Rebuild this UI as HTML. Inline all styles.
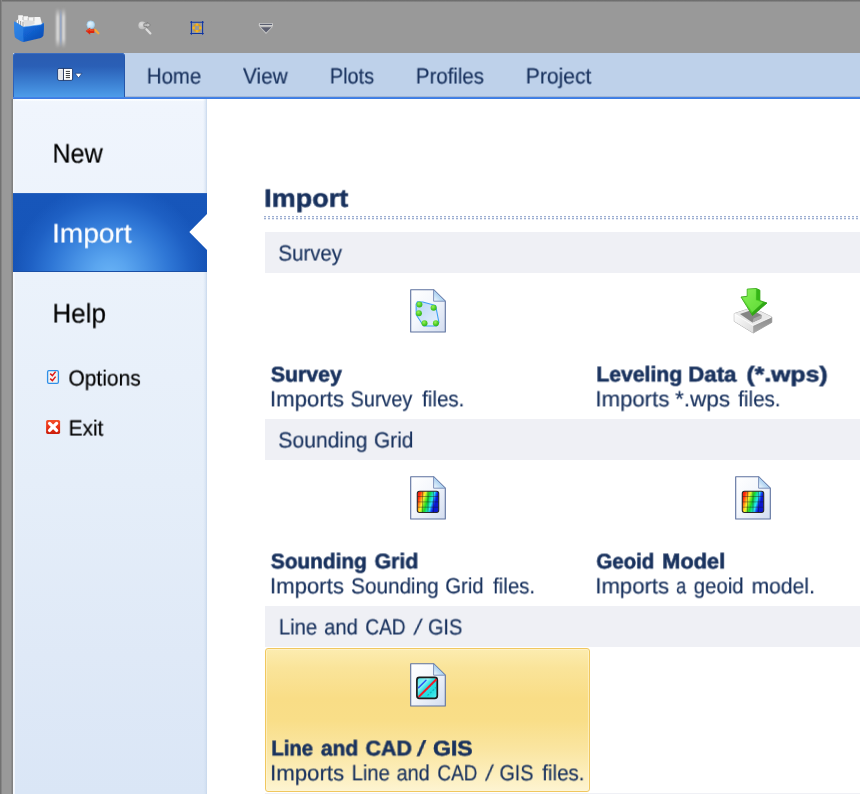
<!DOCTYPE html>
<html lang="en">
<head>
<meta charset="utf-8">
<title>Import</title>
<style>
html,body{margin:0;padding:0;}
body{width:860px;height:794px;overflow:hidden;position:relative;background:#fff;font-family:"Liberation Sans",sans-serif;}
.abs{position:absolute;}
.ln{position:absolute;left:0;top:0;width:0;height:0;font-size:0;line-height:0;white-space:pre;}
.t{position:absolute;white-space:pre;transform-origin:0 0;margin:0;padding:0;text-rendering:geometricPrecision;will-change:transform;}
#frame{left:0;top:0;width:860px;height:794px;background:#999999;}
#topedge{left:0;top:0;width:860px;height:2px;background:linear-gradient(#6c6c6c 0%,#707070 45%,#929292 100%);}
#leftedge{left:0;top:0;width:2px;height:794px;background:linear-gradient(90deg,#6e6e6e 0%,#747474 45%,#949494 100%);}
#sbedge{left:11px;top:99px;width:4px;height:695px;background:linear-gradient(90deg,#969696 0%,#858585 20%,#7e7e7e 44%,#f4f8fd 56%,#f8fbff 75%,#ebf2fb 100%);}
#ribbon{left:13px;top:53px;width:847px;height:44px;background:#bed1ea;}
#ribline{left:13px;top:96px;width:847px;height:3px;background:linear-gradient(#a9bcd8 0%,#9fb4d4 30%,#4683e6 42%,#3d7ce3 84%,#a2c3f5 100%);}
#appbtn{left:13px;top:53px;width:112px;height:44.4px;border-radius:4px 4px 0 0;background:linear-gradient(#2a5cb1 0%,#2a5fb6 30%,#3a7dd0 65%,#4d9ce9 100%);box-shadow:inset 0 1px 0 #3a6cc0, inset 1px 0 0 #2d62b8, inset -1px 0 0 #2456aa;}
#sidebar{left:13px;top:99px;width:194px;height:695px;background:linear-gradient(#fdfeff 0,#fbfdff 1.2px,#f1f6fd 2.4px,#f0f5fd 1%,#ebf2fb 25%,#e5eef9 55%,#dfe9f7 80%,#dae6f6 100%);}
#sbshade{left:203px;top:99px;width:4px;height:695px;background:linear-gradient(90deg,rgba(208,222,240,0) 0%,rgba(208,222,240,.45) 55%,#c8d8ec 100%);}
#content{left:207px;top:99px;width:653px;height:695px;background:#fff;}
#sel{left:13px;top:193px;width:194px;height:79px;background:radial-gradient(ellipse 98px 92px at 50% 104%,#68b2f5 0%,#5aa5ef 18%,#4690e4 38%,#2f77d6 60%,#1e60c4 82%,rgba(24,86,186,0) 100%),linear-gradient(#1756ba,#1655b9 60%,#1552b4);box-shadow:inset 0 1px 0 #2a63bd, inset 0 -1px 0 #1a4fa5;}
#notch{left:189px;top:214px;width:18px;height:36px;}
.ghead{left:265px;width:595px;height:41px;background:#eff0f5;}
#dots{left:264px;top:215.7px;width:596px;height:4px;}
#selitem{left:265px;top:648px;width:323px;height:142px;border:1px solid #f0c75f;border-radius:3px;background:linear-gradient(#fcecb0 0%,#fae49a 13%,#f9dd86 35%,#f9de88 50%,#fae5a0 70%,#fceebc 88%,#fdf4d2 100%);box-shadow:inset 0 0 0 1px rgba(255,248,220,.55);}
svg{position:absolute;overflow:visible;}
#tab1w0{left:146px;top:61px;font-size:22px;line-height:29px;font-weight:400;color:#19325e;transform:translate(0.78px,0.53px) scale(0.9279,0.999);-webkit-text-stroke:0.2px #19325e;}
#tab2w0{left:243px;top:61px;font-size:22px;line-height:29px;font-weight:400;color:#19325e;transform:translate(0.01px,0.53px) scale(0.9426,0.999);-webkit-text-stroke:0.2px #19325e;}
#tab3w0{left:329px;top:61px;font-size:22px;line-height:29px;font-weight:400;color:#19325e;transform:translate(0.83px,0.52px) scale(0.9037,0.999);-webkit-text-stroke:0.2px #19325e;}
#tab4w0{left:415px;top:61px;font-size:22px;line-height:29px;font-weight:400;color:#19325e;transform:translate(0.83px,0.53px) scale(0.9296,0.999);-webkit-text-stroke:0.2px #19325e;}
#tab5w0{left:525px;top:61px;font-size:22px;line-height:29px;font-weight:400;color:#19325e;transform:translate(0.72px,0.52px) scale(0.9604,0.999);-webkit-text-stroke:0.2px #19325e;}
#sb1w0{left:52px;top:136px;font-size:26.8px;line-height:35px;font-weight:400;color:#000;transform:translate(0.45px,0.61px) scale(0.9384,0.999);-webkit-text-stroke:0.2px #000;}
#sb2w0{left:52px;top:216px;font-size:26.8px;line-height:35px;font-weight:400;color:#fff;transform:translate(0.07px,0.53px) scale(1.0460,0.999);-webkit-text-stroke:0.2px #fff;}
#sb3w0{left:52px;top:296px;font-size:26.8px;line-height:35px;font-weight:400;color:#000;transform:translate(0.39px,0.56px) scale(0.9713,0.999);-webkit-text-stroke:0.2px #000;}
#sb4w0{left:68px;top:363px;font-size:22px;line-height:29px;font-weight:400;color:#000;transform:translate(0.42px,0.58px) scale(0.9549,0.999);-webkit-text-stroke:0.2px #000;}
#sb5w0{left:68px;top:413px;font-size:22px;line-height:29px;font-weight:400;color:#000;transform:translate(0.61px,0.58px) scale(0.9465,0.999);-webkit-text-stroke:0.2px #000;}
#h1w0{left:264px;top:182px;font-size:25px;line-height:32px;font-weight:700;color:#19325e;transform:translate(0.24px,0.76px) scale(1.0793,0.999);-webkit-text-stroke:0.6px #19325e;}
#g1w0{left:278px;top:238px;font-size:22px;line-height:29px;font-weight:400;color:#19325e;transform:translate(0.41px,0.54px) scale(0.9275,0.999);-webkit-text-stroke:0.2px #19325e;}
#g2w0{left:278px;top:425px;font-size:22px;line-height:29px;font-weight:400;color:#19325e;transform:translate(0.31px,0.46px) scale(0.9589,0.999);-webkit-text-stroke:0.2px #19325e;}
#g2w1{left:373px;top:425px;font-size:22px;line-height:29px;font-weight:400;color:#19325e;transform:translate(0.89px,0.49px) scale(0.9526,0.999);-webkit-text-stroke:0.2px #19325e;}
#g3w0{left:278px;top:612px;font-size:22px;line-height:29px;font-weight:400;color:#19325e;transform:translate(0.84px,0.46px) scale(0.9234,0.999);-webkit-text-stroke:0.2px #19325e;}
#g3w1{left:324px;top:612px;font-size:22px;line-height:29px;font-weight:400;color:#19325e;transform:translate(0.14px,0.45px) scale(0.9176,0.999);-webkit-text-stroke:0.2px #19325e;}
#g3w2{left:365px;top:612px;font-size:22px;line-height:29px;font-weight:400;color:#19325e;transform:translate(0.27px,0.46px) scale(0.8680,0.999);-webkit-text-stroke:0.2px #19325e;}
#g3w3{left:417px;top:612px;font-size:22px;line-height:29px;font-weight:400;color:#19325e;transform:translate(0.79px,0.90px) skewX(-11.48deg) scale(0.999,0.999);-webkit-text-stroke:0.2px #19325e;}
#g3w4{left:427px;top:612px;font-size:22px;line-height:29px;font-weight:400;color:#19325e;transform:translate(0.94px,0.50px) scale(0.9062,0.999);-webkit-text-stroke:0.2px #19325e;}
#a1w0{left:270px;top:361px;font-size:21.2px;line-height:28px;font-weight:700;color:#19325e;transform:translate(0.81px,0.47px) scale(1.0047,0.999);-webkit-text-stroke:0.6px #19325e;}
#a2w0{left:269px;top:384px;font-size:22px;line-height:29px;font-weight:400;color:#19325e;transform:translate(0.87px,0.40px) scale(1.0106,0.999);-webkit-text-stroke:0.2px #19325e;}
#a2w1{left:350px;top:384px;font-size:22px;line-height:29px;font-weight:400;color:#19325e;transform:translate(0.61px,0.44px) scale(0.8998,0.999);-webkit-text-stroke:0.2px #19325e;}
#a2w2{left:422px;top:384px;font-size:22px;line-height:29px;font-weight:400;color:#19325e;transform:translate(0.14px,0.43px) scale(0.9338,0.999);-webkit-text-stroke:0.2px #19325e;}
#b1w0{left:596px;top:361px;font-size:21.2px;line-height:28px;font-weight:700;color:#19325e;transform:translate(0.28px,0.40px) scale(0.9999,0.999);-webkit-text-stroke:0.6px #19325e;}
#b1w1{left:688px;top:361px;font-size:21.2px;line-height:28px;font-weight:700;color:#19325e;transform:translate(0.30px,0.46px) scale(1.0498,0.999);-webkit-text-stroke:0.6px #19325e;}
#b1w2{left:746px;top:361px;font-size:21.2px;line-height:28px;font-weight:700;color:#19325e;transform:translate(0.38px,0.47px) scale(1.1709,0.999);-webkit-text-stroke:0.6px #19325e;}
#b2w0{left:595px;top:384px;font-size:22px;line-height:29px;font-weight:400;color:#19325e;transform:translate(0.33px,0.43px) scale(1.0095,0.999);-webkit-text-stroke:0.2px #19325e;}
#b2w1{left:675px;top:384px;font-size:22px;line-height:29px;font-weight:400;color:#19325e;transform:translate(0.11px,0.42px) scale(1.0237,0.999);-webkit-text-stroke:0.2px #19325e;}
#b2w2{left:738px;top:384px;font-size:22px;line-height:29px;font-weight:400;color:#19325e;transform:translate(0.21px,0.39px) scale(0.9366,0.999);-webkit-text-stroke:0.2px #19325e;}
#c1w0{left:270px;top:548px;font-size:21.2px;line-height:28px;font-weight:700;color:#19325e;transform:translate(0.79px,0.39px) scale(0.9825,0.999);-webkit-text-stroke:0.6px #19325e;}
#c1w1{left:374px;top:548px;font-size:21.2px;line-height:28px;font-weight:700;color:#19325e;transform:translate(0.51px,0.38px) scale(1.0036,0.999);-webkit-text-stroke:0.6px #19325e;}
#c2w0{left:269px;top:571px;font-size:22px;line-height:29px;font-weight:400;color:#19325e;transform:translate(0.87px,0.40px) scale(1.0094,0.999);-webkit-text-stroke:0.2px #19325e;}
#c2w1{left:351px;top:571px;font-size:22px;line-height:29px;font-weight:400;color:#19325e;transform:translate(0.08px,0.45px) scale(0.9418,0.999);-webkit-text-stroke:0.2px #19325e;}
#c2w2{left:445px;top:571px;font-size:22px;line-height:29px;font-weight:400;color:#19325e;transform:translate(0.23px,0.32px) scale(0.9248,0.999);-webkit-text-stroke:0.2px #19325e;}
#c2w3{left:493px;top:571px;font-size:22px;line-height:29px;font-weight:400;color:#19325e;transform:translate(0.05px,0.45px) scale(0.9309,0.999);-webkit-text-stroke:0.2px #19325e;}
#d1w0{left:596px;top:548px;font-size:21.2px;line-height:28px;font-weight:700;color:#19325e;transform:translate(0.33px,0.45px) scale(0.9653,0.999);-webkit-text-stroke:0.6px #19325e;}
#d1w1{left:662px;top:548px;font-size:21.2px;line-height:28px;font-weight:700;color:#19325e;transform:translate(0.18px,0.44px) scale(1.0287,0.999);-webkit-text-stroke:0.6px #19325e;}
#d2w0{left:595px;top:571px;font-size:22px;line-height:29px;font-weight:400;color:#19325e;transform:translate(0.26px,0.43px) scale(1.0067,0.999);-webkit-text-stroke:0.2px #19325e;}
#d2w1{left:676px;top:571px;font-size:22px;line-height:29px;font-weight:400;color:#19325e;transform:translate(0.03px,0.34px) scale(0.8330,0.999);-webkit-text-stroke:0.2px #19325e;}
#d2w2{left:693px;top:571px;font-size:22px;line-height:29px;font-weight:400;color:#19325e;transform:translate(0.69px,0.39px) scale(0.9277,0.999);-webkit-text-stroke:0.2px #19325e;}
#d2w3{left:751px;top:571px;font-size:22px;line-height:29px;font-weight:400;color:#19325e;transform:translate(0.58px,0.45px) scale(0.9583,0.999);-webkit-text-stroke:0.2px #19325e;}
#e1w0{left:271px;top:735px;font-size:21.2px;line-height:28px;font-weight:700;color:#19325e;transform:translate(0.25px,0.43px) scale(0.9597,0.999);-webkit-text-stroke:0.6px #19325e;}
#e1w1{left:320px;top:735px;font-size:21.2px;line-height:28px;font-weight:700;color:#19325e;transform:translate(0.90px,0.43px) scale(0.9872,0.999);-webkit-text-stroke:0.6px #19325e;}
#e1w2{left:365px;top:735px;font-size:21.2px;line-height:28px;font-weight:700;color:#19325e;transform:translate(0.48px,0.45px) scale(1.0087,0.999);-webkit-text-stroke:0.6px #19325e;}
#e1w3{left:421px;top:735px;font-size:21.2px;line-height:28px;font-weight:700;color:#19325e;transform:translate(0.50px,0.10px) skewX(-13.05deg) scale(0.999,0.999);-webkit-text-stroke:0.6px #19325e;}
#e1w4{left:433px;top:735px;font-size:21.2px;line-height:28px;font-weight:700;color:#19325e;transform:translate(0.06px,0.46px) scale(1.0829,0.999);-webkit-text-stroke:0.6px #19325e;}
#e2w0{left:270px;top:758px;font-size:22px;line-height:29px;font-weight:400;color:#19325e;transform:translate(0.02px,0.45px) scale(1.0107,0.999);-webkit-text-stroke:0.2px #19325e;}
#e2w1{left:351px;top:758px;font-size:22px;line-height:29px;font-weight:400;color:#19325e;transform:translate(0.65px,0.34px) scale(0.9204,0.999);-webkit-text-stroke:0.2px #19325e;}
#e2w2{left:396px;top:758px;font-size:22px;line-height:29px;font-weight:400;color:#19325e;transform:translate(0.59px,0.34px) scale(0.9008,0.999);-webkit-text-stroke:0.2px #19325e;}
#e2w3{left:437px;top:758px;font-size:22px;line-height:29px;font-weight:400;color:#19325e;transform:translate(0.32px,0.45px) scale(0.8634,0.999);-webkit-text-stroke:0.2px #19325e;}
#e2w4{left:488px;top:758px;font-size:22px;line-height:29px;font-weight:400;color:#19325e;transform:translate(0.65px,0.68px) skewX(-9.23deg) scale(0.999,0.999);-webkit-text-stroke:0.2px #19325e;}
#e2w5{left:499px;top:758px;font-size:22px;line-height:29px;font-weight:400;color:#19325e;transform:translate(0.49px,0.38px) scale(0.8940,0.999);-webkit-text-stroke:0.2px #19325e;}
#e2w6{left:542px;top:758px;font-size:22px;line-height:29px;font-weight:400;color:#19325e;transform:translate(0.24px,0.38px) scale(0.9341,0.999);-webkit-text-stroke:0.2px #19325e;}
</style>
</head>
<body>
<div id="frame" class="abs"></div>
<div id="topedge" class="abs"></div>
<div id="leftedge" class="abs"></div>

<!-- quick access toolbar -->
<svg id="qat" style="left:0;top:0" width="300" height="53" viewBox="0 0 300 53">
  <defs>
    <linearGradient id="gBox" x1="0" y1="0" x2="1" y2="1"><stop offset="0" stop-color="#2a80e6"/><stop offset=".5" stop-color="#1262d0"/><stop offset="1" stop-color="#0c47ac"/></linearGradient>
    <linearGradient id="gSep" x1="0" y1="0" x2="0" y2="1"><stop offset="0" stop-color="#fff" stop-opacity="0"/><stop offset=".22" stop-color="#fff" stop-opacity="1"/><stop offset=".78" stop-color="#fff" stop-opacity="1"/><stop offset="1" stop-color="#fff" stop-opacity="0"/></linearGradient>
    <linearGradient id="gSepB" x1="0" y1="0" x2="0" y2="1"><stop offset="0" stop-color="#93a6c8" stop-opacity="0"/><stop offset=".2" stop-color="#93a6c8" stop-opacity="1"/><stop offset=".8" stop-color="#93a6c8" stop-opacity="1"/><stop offset="1" stop-color="#93a6c8" stop-opacity="0"/></linearGradient>
    <radialGradient id="gLens" cx=".4" cy=".35" r=".8"><stop offset="0" stop-color="#e4f4fd"/><stop offset="1" stop-color="#a8d4f2"/></radialGradient>
    <radialGradient id="gLensG" cx=".4" cy=".35" r=".8"><stop offset="0" stop-color="#dcdcdc"/><stop offset="1" stop-color="#b4b4b4"/></radialGradient>
    <filter id="b03" x="-5%" y="-50%" width="110%" height="200%"><feGaussianBlur stdDeviation="0.35"/></filter>
    <filter id="b05" x="-20%" y="-20%" width="140%" height="140%"><feGaussianBlur stdDeviation="0.5"/></filter>
    <filter id="b08" x="-20%" y="-20%" width="140%" height="140%"><feGaussianBlur stdDeviation="0.8"/></filter>
    <filter id="b12" x="-50%" y="-20%" width="200%" height="140%"><feGaussianBlur stdDeviation="1.0"/></filter>
  </defs>
  <!-- app logo: blue box with papers -->
  <g filter="url(#b05)">
    <path d="M16.6 20.2 L18.2 19.6 L18.2 15.2 L22.8 15.2 L23.1 16.8 L23.9 16.2 L27.9 16.2 L28.3 17.8 L29 17.2 L33.6 17.2 L34 18 L34.6 16.9 L40.2 17 L41.9 23.4 L41 26 L24.4 28 L16.6 24 Z" fill="#f5f5f5"/>
    <path d="M22.9 19.8 L28.2 20.3 L33.8 20.8 L34.4 20.4 L34.6 24 L25 26.5 Z" fill="#dedede"/>
    <path d="M18.5 20.3 V24.6 M20.6 21 V25.8 M23 21.8 V27" stroke="#7c7c7c" stroke-width=".7" fill="none"/>
    <path d="M23 16.9 V20 M28.2 17.8 V20.4 M33.9 18 V20.8" stroke="#9a9a9a" stroke-width=".7" fill="none"/>
    <path d="M14.1 21.6 L16.3 22.5 L23.4 26.9 L40.8 24.8 L43.9 22.7 C44.1 28 43.9 32 43.4 35.6 C42.4 37.4 40.8 38 39.8 38.3 L23.6 41.9 C19.6 40.6 16.2 38.4 14.9 36.9 C14.2 31 14 26 14.1 21.6 Z" fill="url(#gBox)"/>
    <path d="M14.1 21.6 L16.3 22.5 L23.4 26.9 C23.2 32 23.2 37 23.6 41.9 C19.6 40.6 16.2 38.4 14.9 36.9 C14.2 31 14 26 14.1 21.6 Z" fill="#3a8eea" opacity=".55"/>
    <path d="M23.4 26.9 L40.8 24.8 L43.9 22.7" stroke="#4b9af0" stroke-width=".8" fill="none" opacity=".7"/>
  </g>
  <!-- separator -->
  <g filter="url(#b12)">
    <rect x="56.3" y="8" width="3" height="40" fill="url(#gSep)" opacity=".72"/>
    <rect x="62" y="8" width="3" height="40" fill="url(#gSep)" opacity=".66"/>
  </g>
  <rect x="59.9" y="8.5" width="1.7" height="39" fill="url(#gSepB)" opacity=".85" filter="url(#b05)"/>
  <!-- zoom previous -->
  <g filter="url(#b05)">
    <circle cx="90.7" cy="24.7" r="3.8" fill="url(#gLens)" stroke="#9fcdee" stroke-width=".8"/>
    <path d="M95 29.9 L98.4 33.3" stroke="#f4a83c" stroke-width="2.3" stroke-linecap="round"/>
    <path d="M85.7 31.1 L90.2 27.4 L90.2 29.3 L94.3 29.3 L94.3 32.9 L90.2 32.9 L90.2 34.8 Z" fill="#de2610"/>
    <path d="M87.2 31 L90 28.8 L90 30.2 L93.6 30.2" stroke="#f46a3a" stroke-width=".8" fill="none"/>
  </g>
  <!-- zoom next (disabled) -->
  <g filter="url(#b05)">
    <circle cx="142.2" cy="25.4" r="3.8" fill="url(#gLensG)"/>
    <path d="M146.4 29.2 L150.4 33.4" stroke="#dcdcdc" stroke-width="2.2" stroke-linecap="round"/>
    <path d="M150.6 25 L147.2 22.2 L147.2 23.8 L143.9 23.8 L143.9 26.4 L147.2 26.4 L147.2 27.9 Z" fill="#c4c4c4" stroke="#787878" stroke-width=".8" stroke-linejoin="round"/>
  </g>
  <!-- zoom extents -->
  <g filter="url(#b05)">
    <path d="M190.2 22.3 H203.8 M190.2 33.5 H203.8 M191.4 21 V34.8 M202.6 21 V34.8" stroke="#0f34a4" stroke-width="1.05" fill="none"/>
    <circle cx="197" cy="27.9" r="3.3" fill="none" stroke="#e39a0c" stroke-width="1.1"/>
    <circle cx="197" cy="24.6" r="1.35" fill="#f6b41c"/><circle cx="197" cy="31.2" r="1.35" fill="#f6b41c"/>
    <circle cx="193.7" cy="27.9" r="1.35" fill="#f6b41c"/><circle cx="200.3" cy="27.9" r="1.35" fill="#f6b41c"/>
  </g>
  <!-- customize dropdown -->
  <g filter="url(#b05)">
    <rect x="258.8" y="23" width="14.2" height="3.4" rx="1" fill="#cfcfcf"/>
    <rect x="259.9" y="23.8" width="12.2" height="1.2" fill="#5a5e70"/>
    <path d="M259.2 26.4 H273 L266 34 Z" fill="#c6c6c6"/>
    <path d="M260.9 27.2 H271.4 L266.1 32.4 Z" fill="#5c5f70"/>
  </g>
</svg>

<!-- ribbon -->
<div id="ribbon" class="abs"></div>
<div id="ribline" class="abs"></div>
<div id="appbtn" class="abs"></div>
<svg style="left:56px;top:66px" width="30" height="18" viewBox="56 66 30 18">
  <g filter="url(#b05)">
    <rect x="57.7" y="68.4" width="14.9" height="12" rx="1.4" fill="#fff" stroke="#123068" stroke-width=".9"/>
    <rect x="58.8" y="69.6" width="3.4" height="9.6" fill="#e6e6ea"/>
    <rect x="62.9" y="68.4" width="1" height="12" fill="#1a2c52"/>
    <path d="M65.8 71.4 H70 M65.8 73.5 H70 M65.8 75.6 H70 M65.8 77.6 H70" stroke="#3a3a3a" stroke-width="1"/>
    <path d="M75 73.3 H82 L78.5 77.9 Z" fill="#fff" stroke="#16387a" stroke-width=".7" stroke-linejoin="round"/>
  </g>
</svg>
<div id="tab1" class="ln"><span id="tab1w0" class="t">Home</span></div>
<div id="tab2" class="ln"><span id="tab2w0" class="t">View</span></div>
<div id="tab3" class="ln"><span id="tab3w0" class="t">Plots</span></div>
<div id="tab4" class="ln"><span id="tab4w0" class="t">Profiles</span></div>
<div id="tab5" class="ln"><span id="tab5w0" class="t">Project</span></div>

<!-- backstage sidebar -->
<div id="sidebar" class="abs"></div>
<div id="sbshade" class="abs"></div>
<div id="sbedge" class="abs"></div>
<div id="content" class="abs"></div>
<div id="sel" class="abs"></div>
<svg id="notch" width="18" height="36" viewBox="0 0 18 36"><path d="M18 0 L0.3 18 L18 36 Z" fill="#fff"/></svg>
<div id="sb1" class="ln"><span id="sb1w0" class="t">New</span></div>
<div id="sb2" class="ln"><span id="sb2w0" class="t">Import</span></div>
<div id="sb3" class="ln"><span id="sb3w0" class="t">Help</span></div>
<svg style="left:44px;top:367px" width="18" height="20" viewBox="44 367 18 20">
  <g filter="url(#b05)">
    <rect x="47.6" y="370.6" width="10.8" height="12.8" rx="1.3" fill="#f3f3f3" stroke="#2f8fe8" stroke-width="1.3"/>
    <path d="M50.2 373.6 L52.4 375.6 L55.6 371.6" fill="none" stroke="#e01818" stroke-width="1.5"/>
    <path d="M50.2 378.6 L52.4 380.6 L55.6 376.6" fill="none" stroke="#e01818" stroke-width="1.5"/>
  </g>
</svg>
<div id="sb4" class="ln"><span id="sb4w0" class="t">Options</span></div>
<svg style="left:44px;top:417px" width="18" height="20" viewBox="44 417 18 20">
  <defs><linearGradient id="gRed" x1="0" y1="0" x2="0" y2="1"><stop offset="0" stop-color="#f4512a"/><stop offset=".5" stop-color="#ea3216"/><stop offset="1" stop-color="#c91e0c"/></linearGradient></defs>
  <g filter="url(#b05)">
    <rect x="46.1" y="419.9" width="14" height="14" rx="1.6" fill="url(#gRed)"/>
    <path d="M49.6 423.4 L56.6 430.4 M56.6 423.4 L49.6 430.4" stroke="#fff" stroke-width="3.3" stroke-linecap="round"/>
  </g>
</svg>
<div id="sb5" class="ln"><span id="sb5w0" class="t">Exit</span></div>

<!-- content -->
<div id="h1" class="ln"><span id="h1w0" class="t">Import</span></div>
<svg id="dots" width="596" height="4" viewBox="0 0 596 4">
  <defs><pattern id="pd" x="0" y="0" width="4" height="4" patternUnits="userSpaceOnUse"><rect x="0" y="0" width="2" height="1.3" fill="#9dafd2"/><rect x="0" y="2" width="2" height="1.3" fill="#9dafd2"/></pattern></defs>
  <rect x="0" y="0" width="596" height="4" fill="url(#pd)" filter="url(#b03)"/>
</svg>

<div class="abs ghead" style="top:232px"></div>
<div id="g1" class="ln"><span id="g1w0" class="t">Survey</span></div>
<div class="abs ghead" style="top:419px"></div>
<div id="g2" class="ln"><span id="g2w0" class="t">Sounding</span> <span id="g2w1" class="t">Grid</span></div>
<div class="abs ghead" style="top:606px"></div>
<div class="abs ghead" style="top:793px"></div>
<div id="g3" class="ln"><span id="g3w0" class="t">Line</span> <span id="g3w1" class="t">and</span> <span id="g3w2" class="t">CAD</span> <span id="g3w3" class="t">/</span> <span id="g3w4" class="t">GIS</span></div>
<div id="selitem" class="abs"></div>

<!-- icons -->
<svg style="left:0;top:0;width:0;height:0" width="0" height="0">
  <defs>
    <linearGradient id="gPage" x1="0" y1="0" x2="1" y2="1"><stop offset="0" stop-color="#ffffff"/><stop offset=".45" stop-color="#f4f7fc"/><stop offset="1" stop-color="#d3ddf0"/></linearGradient>
    <linearGradient id="gFold" x1="0" y1="1" x2="1" y2="0"><stop offset="0" stop-color="#f5fbff"/><stop offset=".5" stop-color="#a9d0f0"/><stop offset="1" stop-color="#dfeefa"/></linearGradient>
    <linearGradient id="gPoly" x1="0" y1="0" x2="1" y2="1"><stop offset="0" stop-color="#b9d6f5"/><stop offset="1" stop-color="#e8f1fc"/></linearGradient>
    <radialGradient id="gDot" cx=".4" cy=".35" r=".7"><stop offset="0" stop-color="#9cf05a"/><stop offset=".6" stop-color="#4dcc28"/><stop offset="1" stop-color="#2fae1c"/></radialGradient>
    <linearGradient id="gRain" x1="0" y1="0" x2=".92" y2=".28"><stop offset="0" stop-color="#f01810"/><stop offset=".16" stop-color="#ff2a10"/><stop offset=".3" stop-color="#ffa818"/><stop offset=".39" stop-color="#fff030"/><stop offset=".5" stop-color="#70e828"/><stop offset=".6" stop-color="#18d828"/><stop offset=".72" stop-color="#18e0a0"/><stop offset=".82" stop-color="#28e8f8"/><stop offset=".93" stop-color="#1848f0"/><stop offset="1" stop-color="#0c18d0"/></linearGradient>
    <linearGradient id="gCad" x1="0" y1="0" x2="1" y2="1"><stop offset="0" stop-color="#38e6ea"/><stop offset=".3" stop-color="#9af4f6"/><stop offset=".45" stop-color="#30e2e6"/><stop offset=".7" stop-color="#22dce0"/><stop offset="1" stop-color="#5af0f2"/></linearGradient>
    <linearGradient id="gArrow" x1="0" y1="0" x2="1" y2="1"><stop offset="0" stop-color="#8cf060"/><stop offset=".5" stop-color="#52d62a"/><stop offset="1" stop-color="#2fb414"/></linearGradient>
    <linearGradient id="gBoxL" x1="0" y1="0" x2="1" y2="1"><stop offset="0" stop-color="#fdfdfd"/><stop offset="1" stop-color="#dcdcdc"/></linearGradient>
    <linearGradient id="gBoxR" x1="0" y1="0" x2="0" y2="1"><stop offset="0" stop-color="#8c8c8c"/><stop offset="1" stop-color="#a8a8a8"/></linearGradient>
  </defs>
</svg>

<!-- Survey icon -->
<svg style="left:410px;top:289px" width="36" height="44" viewBox="0 0 36 44">
  <g filter="url(#b05)">
    <path d="M0.7 0.7 H23.6 L35.3 12.2 V43 H0.7 Z" fill="url(#gPage)" stroke="#5d719e" stroke-width="1.1" stroke-linejoin="round"/>
    <path d="M23.6 0.7 V12.2 H35.3 Z" fill="url(#gFold)" stroke="#7388b4" stroke-width=".9" stroke-linejoin="round"/>
    <path d="M7.4 12.7 L12.8 12.9 L25.6 16.4 L28.9 33.4 L26.6 37 L13.6 37 L6.2 25.8 L6.1 15.2 Z" fill="url(#gPoly)" stroke="#3a9ef4" stroke-width="1.05" stroke-linejoin="round"/>
    <circle cx="9.4" cy="15.5" r="3" fill="url(#gDot)"/>
    <circle cx="23.6" cy="18.7" r="3" fill="url(#gDot)"/>
    <circle cx="8.9" cy="24.2" r="3" fill="url(#gDot)"/>
    <circle cx="14.5" cy="34.2" r="3" fill="url(#gDot)"/>
    <circle cx="25.9" cy="34.2" r="3" fill="url(#gDot)"/>
  </g>
</svg>
<div id="a1" class="ln"><span id="a1w0" class="t">Survey</span></div>
<div id="a2" class="ln"><span id="a2w0" class="t">Imports</span> <span id="a2w1" class="t">Survey</span> <span id="a2w2" class="t">files.</span></div>

<!-- Leveling icon -->
<svg style="left:723px;top:280px" width="60" height="60" viewBox="0 0 60 60">
  <g filter="url(#b05)">
    <path d="M11.3 33.6 L29.5 27.6 L48.8 37 L48.8 42.4 L30.2 53 L11.3 41.3 Z" fill="#ececec" stroke="#a4a4a4" stroke-width=".9" stroke-linejoin="round"/>
    <path d="M11.3 33.6 L29.5 27.6 L48.8 37 L30.2 45.4 Z" fill="#e9e9e9"/>
    <path d="M17 33.9 L28.6 30 L38.6 35 L38.2 38.4 L29.4 42.4 Z" fill="#858585"/>
    <path d="M29.4 42.4 L38.2 38.4 L38.6 35 L30.5 38.5 Z" fill="#a9a9a9"/>
    <path d="M11.3 33.6 L30.2 45.4 L30.2 53 L11.3 41.3 Z" fill="url(#gBoxL)"/>
    <path d="M30.2 45.4 L48.8 37 L48.8 42.4 L30.2 53 Z" fill="url(#gBoxR)"/>
    <path d="M11.6 33.8 L30.2 45.4 L48.5 37.1" fill="none" stroke="#fff" stroke-width=".9" opacity=".9"/>
    <path d="M24.2 9.1 L33.3 8.5 L36.9 10.2 L36.9 20.6 L44 23 L29.5 35.6 L18 17 L24.2 16.3 Z" fill="url(#gArrow)" stroke="#3aa81a" stroke-width=".9" stroke-linejoin="round"/>
    <path d="M33.3 8.5 L36.9 10.2 L36.9 20.6 L33.3 19.8 Z" fill="#34b417"/>
    <path d="M24.6 9.6 L32.8 9 L32.8 20.3 L39.8 22.4 L29.2 32 L20 17.8 L24.6 16.8 Z" fill="#86ee58" opacity=".55"/>
    <path d="M44 23 L29.5 35.6 L28.3 33.6 L40.8 22.1 Z" fill="#2a9c12" opacity=".75"/>
  </g>
</svg>
<div id="b1" class="ln"><span id="b1w0" class="t">Leveling</span> <span id="b1w1" class="t">Data</span> <span id="b1w2" class="t">(*.wps)</span></div>
<div id="b2" class="ln"><span id="b2w0" class="t">Imports</span> <span id="b2w1" class="t">*.wps</span> <span id="b2w2" class="t">files.</span></div>

<!-- Sounding grid icon -->
<svg style="left:410px;top:476px" width="36" height="44" viewBox="0 0 36 44">
  <g filter="url(#b05)">
    <path d="M0.7 0.7 H23.6 L35.3 12.2 V43 H0.7 Z" fill="url(#gPage)" stroke="#5d719e" stroke-width="1.1" stroke-linejoin="round"/>
    <path d="M23.6 0.7 V12.2 H35.3 Z" fill="url(#gFold)" stroke="#7388b4" stroke-width=".9" stroke-linejoin="round"/>
    <rect x="7.3" y="15.2" width="21.4" height="21.3" rx="2.2" fill="url(#gRain)" stroke="#2a2a2a" stroke-width="1.1"/>
    <path d="M12.6 15.5 V36.2 M18 15.5 V36.2 M23.4 15.5 V36.2 M7.6 20.5 H28.4 M7.6 25.9 H28.4 M7.6 31.2 H28.4" stroke="#1a1a1a" stroke-opacity=".45" stroke-width=".9" fill="none"/>
  </g>
</svg>
<div id="c1" class="ln"><span id="c1w0" class="t">Sounding</span> <span id="c1w1" class="t">Grid</span></div>
<div id="c2" class="ln"><span id="c2w0" class="t">Imports</span> <span id="c2w1" class="t">Sounding</span> <span id="c2w2" class="t">Grid</span> <span id="c2w3" class="t">files.</span></div>

<!-- Geoid icon -->
<svg style="left:735px;top:476px" width="36" height="44" viewBox="0 0 36 44">
  <g filter="url(#b05)">
    <path d="M0.7 0.7 H23.6 L35.3 12.2 V43 H0.7 Z" fill="url(#gPage)" stroke="#5d719e" stroke-width="1.1" stroke-linejoin="round"/>
    <path d="M23.6 0.7 V12.2 H35.3 Z" fill="url(#gFold)" stroke="#7388b4" stroke-width=".9" stroke-linejoin="round"/>
    <rect x="7.3" y="15.2" width="21.4" height="21.3" rx="2.2" fill="url(#gRain)" stroke="#2a2a2a" stroke-width="1.1"/>
    <path d="M12.6 15.5 V36.2 M18 15.5 V36.2 M23.4 15.5 V36.2 M7.6 20.5 H28.4 M7.6 25.9 H28.4 M7.6 31.2 H28.4" stroke="#1a1a1a" stroke-opacity=".45" stroke-width=".9" fill="none"/>
  </g>
</svg>
<div id="d1" class="ln"><span id="d1w0" class="t">Geoid</span> <span id="d1w1" class="t">Model</span></div>
<div id="d2" class="ln"><span id="d2w0" class="t">Imports</span> <span id="d2w1" class="t">a</span> <span id="d2w2" class="t">geoid</span> <span id="d2w3" class="t">model.</span></div>

<!-- CAD icon -->
<svg style="left:410px;top:663px" width="36" height="44" viewBox="0 0 36 44">
  <g filter="url(#b05)">
    <path d="M0.7 0.7 H23.6 L35.3 12.2 V43 H0.7 Z" fill="url(#gPage)" stroke="#5d719e" stroke-width="1.1" stroke-linejoin="round"/>
    <path d="M23.6 0.7 V12.2 H35.3 Z" fill="url(#gFold)" stroke="#7388b4" stroke-width=".9" stroke-linejoin="round"/>
    <rect x="6.9" y="14.3" width="20.4" height="21" rx="2.6" fill="url(#gCad)" stroke="#1c1c1c" stroke-width="1.7"/>
    <path d="M8.6 24.6 L16 17.2" stroke="#2a5cf0" stroke-width="1.5" stroke-linecap="round"/>
    <path d="M14 29 L24 19.5 M17.5 32.5 L26 24.5" stroke="#10a8b0" stroke-width="1.2" stroke-dasharray="2 1.5" opacity=".8"/>
    <path d="M8.6 34 L26.4 16.2" stroke="#f01c28" stroke-width="2"/>
  </g>
</svg>
<div id="e1" class="ln"><span id="e1w0" class="t">Line</span> <span id="e1w1" class="t">and</span> <span id="e1w2" class="t">CAD</span> <span id="e1w3" class="t">/</span> <span id="e1w4" class="t">GIS</span></div>
<div id="e2" class="ln"><span id="e2w0" class="t">Imports</span> <span id="e2w1" class="t">Line</span> <span id="e2w2" class="t">and</span> <span id="e2w3" class="t">CAD</span> <span id="e2w4" class="t">/</span> <span id="e2w5" class="t">GIS</span> <span id="e2w6" class="t">files.</span></div>
</body>
</html>
